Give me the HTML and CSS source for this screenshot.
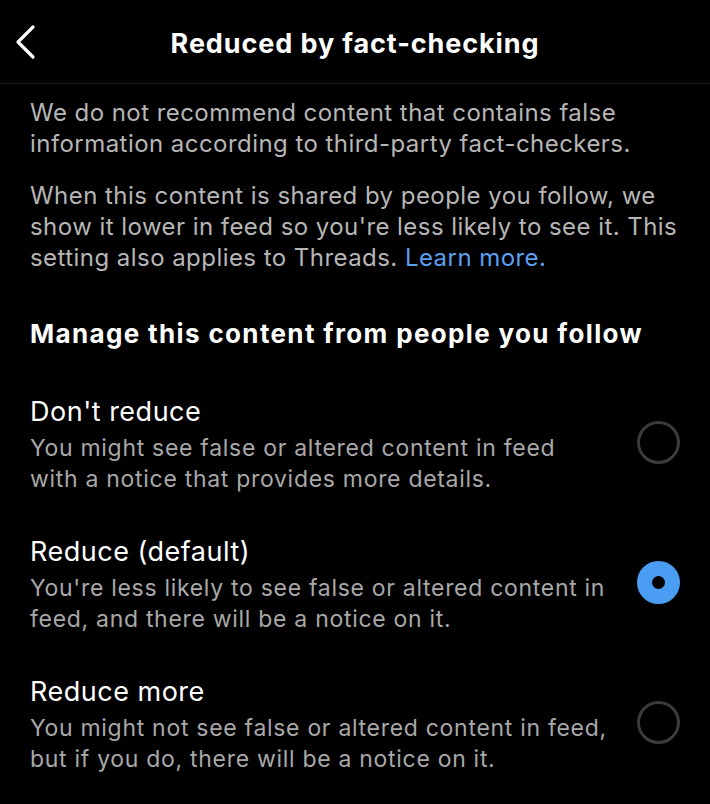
FILE: index.html
```html
<!DOCTYPE html>
<html lang="en">
<head>
  <meta charset="UTF-8" />
  <meta name="viewport" content="width=device-width, initial-scale=1.0"/>
  <title>Reduced by fact-checking</title>
  <link rel="stylesheet" href="styles.css">
</head>
<body>
  <!-- HEADER -->
  <div class="topbar">
    <button class="back-btn" aria-label="Back">
      <svg width="26" height="36" viewBox="0 0 26 36">
        <polyline points="21,3 6,18 21,33" fill="none" stroke="#fff" stroke-width="3.2" stroke-linecap="round" stroke-linejoin="round"/>
      </svg>
    </button>
    <h1 class="title">Reduced by fact-checking</h1>
  </div>

  <!-- INTRO -->
  <div class="content">
    <p class="intro">We do not recommend content that contains false information according to third-party fact-checkers.</p>
    <p class="intro">When this content is shared by people you follow, we show it lower in feed so you're less likely to see it. This setting also applies to Threads. <a class="learn" href="#">Learn more.</a></p>

    <h2 class="section-title">Manage this content from people you follow</h2>

    <!-- OPTIONS -->
    <div class="options">
      <label class="option">
        <div class="option-text">
          <div class="option-name">Don't reduce</div>
          <div class="option-desc">You might see false or altered content in feed with a notice that provides more details.</div>
        </div>
        <span class="radio"></span>
      </label>
      <label class="option">
        <div class="option-text">
          <div class="option-name">Reduce (default)</div>
          <div class="option-desc">You're less likely to see false or altered content in feed, and there will be a notice on it.</div>
        </div>
        <span class="radio checked"></span>
      </label>
      <label class="option">
        <div class="option-text">
          <div class="option-name">Reduce more</div>
          <div class="option-desc">You might not see false or altered content in feed, but if you do, there will be a notice on it.</div>
        </div>
        <span class="radio"></span>
      </label>
    </div>
  </div>
</body>
</html>
```

FILE: styles.css
```css
* { margin: 0; padding: 0; box-sizing: border-box; }
html, body {
  height: 100%;
  background-color: #000;
  color: #fff;
  font-family: 'Inter', 'Liberation Sans', sans-serif;
  overflow: hidden;
}

.topbar {
  position: relative;
  height: 84px;
  display: flex;
  align-items: center;
  justify-content: center;
  border-bottom: 1px solid #1c1c1c;
}

.back-btn {
  position: absolute;
  left: 12px;
  top: 24px;
  background: none;
  border: none;
  cursor: pointer;
}

.title {
  font-size: 27px;
  font-weight: 700;
  letter-spacing: 0.9px;
  margin-top: 4px;
}

.content {
  padding: 13px 30px 0 30px;
}

.intro {
  font-size: 24px;
  line-height: 31px;
  color: #b6b6b6;
  letter-spacing: 0.45px;
  margin-bottom: 21px;
}

.intro:last-of-type { margin-bottom: 0; }

.learn {
  color: #5b9ff0;
  text-decoration: none;
}

.section-title {
  margin-top: 44px;
  font-size: 26px;
  line-height: 34px;
  font-weight: 700;
  letter-spacing: 1.35px;
}

.options {
  margin-top: 42px;
  display: flex;
  flex-direction: column;
  gap: 38px;
}

.option {
  display: flex;
  align-items: flex-start;
  justify-content: space-between;
  gap: 29px;
  cursor: pointer;
}

.option-name {
  font-size: 27px;
  line-height: 38px;
  letter-spacing: 0.5px;
}

.option-desc {
  margin-top: 2px;
  font-size: 23px;
  line-height: 31px;
  color: #a8a8a8;
  letter-spacing: 0.7px;
}

.radio {
  flex: none;
  margin-top: 28px;
  width: 43px;
  height: 43px;
  border-radius: 50%;
  border: 3px solid #3b3b3b;
}

.radio.checked {
  border: 15px solid #4a9df3;
  background: #000;
}
```
